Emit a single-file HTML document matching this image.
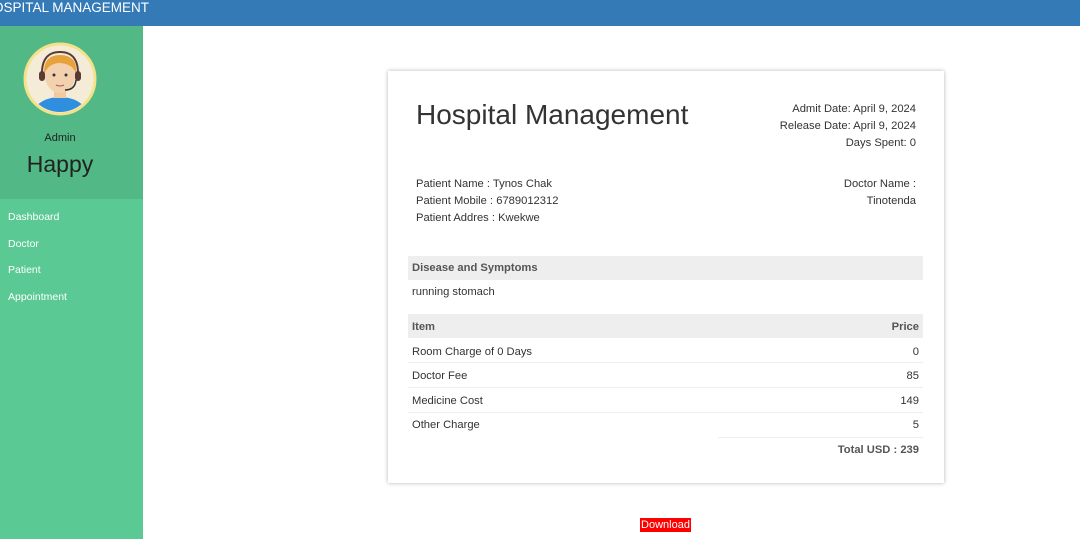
<!DOCTYPE html>
<html><head><style>
body{margin:0;width:1080px;height:539px;overflow:hidden;background:#fff;font-family:"Liberation Sans",Arial,sans-serif;position:relative}
.a{position:absolute;white-space:nowrap}
.hdr{left:0;top:0;width:1080px;height:26px;background:#337ab7;color:#fff;font-size:13.5px;line-height:15px}
.sb1{left:0;top:26px;width:143px;height:173px;background:#52b886}
.sb2{left:0;top:199px;width:143px;height:340px;background:#5bc994}
.nav{left:8px;color:#fff;font-size:10.5px}
.card{left:388px;top:71px;width:556px;height:412px;background:#fff;box-shadow:0 0 4px rgba(0,0,0,.3)}
.t{font-size:11.2px;color:#333}
.gr{background:#eee;left:408px;width:515px}
.ln{left:408px;width:515px;height:1px;background:#eee}
</style></head><body>
<div class="a hdr"><span style="position:relative;left:-7px;top:0">OSPITAL MANAGEMENT</span></div>
<div class="a sb1"></div>
<div class="a sb2"></div>
<svg class="a" style="left:23px;top:42px" width="74" height="74" viewBox="0 0 74 74">
<circle cx="37" cy="37" r="35" fill="#f5ecd8" stroke="#f3e28a" stroke-width="3"/>
<clipPath id="c"><circle cx="37" cy="37" r="33"/></clipPath>
<g clip-path="url(#c)">
<path d="M10 74 Q12 56 37 55 Q62 56 64 74Z" fill="#2f8fde"/>
<rect x="31" y="45" width="12" height="11" fill="#f2c9a0"/>
<ellipse cx="37" cy="34" rx="15" ry="17" fill="#f4d1ae"/>
<path d="M21 32 Q20 13 37 13 Q55 13 53 32 Q50 22 37 21 Q26 21 21 32Z" fill="#e8a23c"/>
<path d="M19 34 Q18 10 37 10 Q56 10 55 34" fill="none" stroke="#5a3b33" stroke-width="2"/>
<rect x="16" y="29" width="6" height="10" rx="3" fill="#5a3b33"/>
<rect x="52" y="29" width="6" height="10" rx="3" fill="#5a3b33"/>
<path d="M53 38 Q52 48 42 48" fill="none" stroke="#333" stroke-width="1.5"/>
<circle cx="31" cy="33" r="1.5" fill="#333"/><circle cx="43" cy="33" r="1.5" fill="#333"/>
<path d="M33 43 Q37 45 41 43" stroke="#a55" fill="none"/>
</g></svg>
<div class="a" style="left:0;width:120px;text-align:center;top:132px;font-size:11px;color:#222">Admin</div>
<div class="a" style="left:0;width:120px;text-align:center;top:151px;font-size:23px;color:#222">Happy</div>
<div class="a nav" style="top:211px">Dashboard</div>
<div class="a nav" style="top:238px">Doctor</div>
<div class="a nav" style="top:264px">Patient</div>
<div class="a nav" style="top:291px">Appointment</div>
<div class="a card"></div>
<div class="a" style="left:416px;top:99px;font-size:28px;color:#333">Hospital Management</div>
<div class="a t" style="right:164px;top:101px;text-align:right;line-height:17px">Admit Date: April 9, 2024<br>Release Date: April 9, 2024<br>Days Spent: 0</div>
<div class="a t" style="left:416px;top:176px;line-height:17px">Patient Name : Tynos Chak<br>Patient Mobile : 6789012312<br>Patient Addres : Kwekwe</div>
<div class="a t" style="right:164px;top:176px;text-align:right;line-height:17px">Doctor Name :<br>Tinotenda</div>
<div class="a gr" style="top:256px;height:24px"></div>
<div class="a t" style="left:412px;top:262px;font-weight:bold;color:#555">Disease and Symptoms</div>
<div class="a t" style="left:412px;top:286px">running stomach</div>
<div class="a gr" style="top:314px;height:24px"></div>
<div class="a t" style="left:412px;top:321px;font-weight:bold;color:#555">Item</div>
<div class="a t" style="right:161px;top:321px;font-weight:bold;color:#555">Price</div>
<div class="a t" style="left:412px;top:346px">Room Charge of 0 Days</div><div class="a t" style="right:161px;top:346px">0</div>
<div class="a ln" style="top:362px"></div>
<div class="a t" style="left:412px;top:370px">Doctor Fee</div><div class="a t" style="right:161px;top:370px">85</div>
<div class="a ln" style="top:387px"></div>
<div class="a t" style="left:412px;top:395px">Medicine Cost</div><div class="a t" style="right:161px;top:395px">149</div>
<div class="a ln" style="top:412px"></div>
<div class="a t" style="left:412px;top:419px">Other Charge</div><div class="a t" style="right:161px;top:419px">5</div>
<div class="a" style="left:718px;top:437px;width:205px;height:1px;background:#eee"></div>
<div class="a t" style="right:161px;top:444px;font-weight:bold;color:#555">Total USD : 239</div>
<div class="a" style="left:640px;top:518px;width:51px;height:14px;background:#f00;color:#fff;font-size:11px;line-height:14px;text-align:center">Download</div>
</body></html>
